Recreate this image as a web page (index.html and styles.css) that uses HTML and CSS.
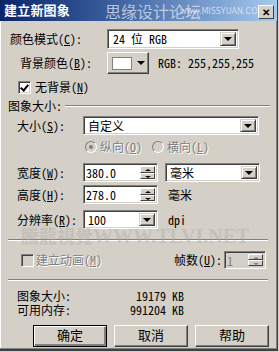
FILE: index.html
```html
<!DOCTYPE html>
<html lang="zh-CN">

<head>
    <meta charset="UTF-8">
    <title>建立新图象</title>
    <link rel="stylesheet" href="styles.css">
</head>

<body>
    <section class="window">
        <header class="titlebar">
            <span class="title">建立新图象</span>
            <span class="mark-cn">思缘设计论坛</span>
            <span class="mark-en">www.MISSYUAN.COM</span>
            <span class="close">✕</span>
        </header>

        <div class="row row-mode">
            <span class="label">颜色模式(<u>C</u>):</span>
            <div class="combo combo-mode">
                <span class="value">24 位 RGB</span>
                <span class="drop"><i class="tri"></i></span>
            </div>
        </div>

        <div class="row row-bg">
            <span class="label">背景颜色(<u>B</u>):</span>
            <div class="color-btn">
                <span class="swatch"></span>
                <i class="tri"></i>
            </div>
            <span class="rgb">RGB: 255,255,255</span>
        </div>

        <div class="row row-check">
            <span class="check checked"></span>
            <span>无背景(<u>N</u>)</span>
        </div>

        <div class="group-head">
            <span>图象大小:</span>
            <span class="etched"></span>
        </div>

        <div class="row row-size">
            <span class="label">大小(<u>S</u>):</span>
            <div class="combo combo-size">
                <span class="value">自定义</span>
                <span class="drop"><i class="tri"></i></span>
            </div>
        </div>

        <div class="row row-radio">
            <span class="radio on"></span>
            <span class="disabled">纵向(<u>O</u>)</span>
            <span class="radio second"></span>
            <span class="disabled">横向(<u>L</u>)</span>
        </div>

        <div class="row row-width">
            <span class="label">宽度(<u>W</u>):</span>
            <div class="spin">
                <span class="value">380.0</span>
                <span class="spin-btns"><i class="up"></i><i class="down"></i></span>
            </div>
            <div class="combo combo-unit">
                <span class="value">毫米</span>
                <span class="drop"><i class="tri"></i></span>
            </div>
        </div>

        <div class="row row-height">
            <span class="label">高度(<u>H</u>):</span>
            <div class="spin">
                <span class="value">278.0</span>
                <span class="spin-btns"><i class="up"></i><i class="down"></i></span>
            </div>
            <span class="unit">毫米</span>
        </div>

        <div class="row row-res">
            <span class="label">分辨率(<u>R</u>):</span>
            <div class="combo combo-res">
                <span class="value">100</span>
                <span class="drop"><i class="tri"></i></span>
            </div>
            <span class="unit">dpi</span>
        </div>

        <div class="sep sep-1"></div>

        <div class="row row-anim">
            <span class="check off"></span>
            <span class="disabled anim-label">建立动画(<u>M</u>)</span>
            <span class="frames">帧数(<u>U</u>):</span>
            <div class="spin spin-off">
                <span class="value">1</span>
                <span class="spin-btns"><i class="up"></i><i class="down"></i></span>
            </div>
        </div>

        <div class="sep sep-2"></div>

        <div class="info">
            <span class="info-label">图象大小:</span>
            <span class="info-value">19179 KB</span>
            <span class="info-label">可用内存:</span>
            <span class="info-value">991204 KB</span>
        </div>

        <div class="buttons">
            <span class="btn default">确定</span>
            <span class="btn">取消</span>
            <span class="btn">帮助</span>
        </div>

        <div class="watermark">騰龍視覺<span class="wm-en">WWW.TLVI.NET</span></div>
    </section>
</body>

</html>
```

FILE: styles.css
```css
body {
    margin: 0;
    background: #d4d0c8;
}

.window {
    position: relative;
    width: 277px;
    height: 349px;
    background: #d4d0c8;
    border-right: 1px solid #404040;
    border-bottom: 2px solid #404040;
    box-shadow: inset -1px -1px 0 #808080, inset 1px 0 0 #ffffff;
    font-family: "Noto Sans Mono CJK SC", "Noto Sans CJK SC", sans-serif;
    font-size: 12px;
    line-height: 14px;
    color: #000;
    overflow: hidden;
}

u {
    text-decoration: underline;
    text-underline-offset: 1px;
}

.titlebar {
    position: relative;
    height: 21px;
    background: linear-gradient(to right, #0a246a 0%, #3a5f9c 40%, #a6caf0 100%);
}

.title {
    position: absolute;
    left: 4px;
    top: 3px;
    font-size: 13px;
    font-weight: bold;
    color: #fff;
    letter-spacing: 0.2px;
}

.mark-cn {
    position: absolute;
    left: 105px;
    top: 1px;
    font-family: "Noto Sans CJK SC", sans-serif;
    font-size: 16px;
    line-height: 20px;
    color: rgba(225, 228, 245, 0.75);
}

.mark-en {
    position: absolute;
    left: 180px;
    top: 7px;
    font-family: "DejaVu Sans", sans-serif;
    font-size: 8px;
    line-height: 10px;
    color: rgba(230, 232, 245, 0.8);
}

.close {
    position: absolute;
    left: 258px;
    top: 5px;
    width: 14px;
    height: 12px;
    background: #d4d0c8;
    border: 1px solid;
    border-color: #fff #404040 #404040 #fff;
    font-size: 10px;
    line-height: 12px;
    font-weight: bold;
    text-align: center;
}

.row {
    display: flex;
    align-items: center;
}

.tri {
    display: block;
    width: 0;
    height: 0;
    border-left: 4px solid transparent;
    border-right: 4px solid transparent;
    border-top: 4px solid #000;
}

.combo,
.spin {
    display: flex;
    box-sizing: border-box;
    background: #fff;
    border: 1px solid;
    border-color: #808080 #fff #fff #808080;
    box-shadow: inset 1px 1px 0 #404040, inset -1px -1px 0 #d4d0c8;
    padding: 2px;
}

.combo .value,
.spin .value {
    flex: 1;
    padding-left: 2px;
    line-height: 13px;
}

.drop {
    display: flex;
    justify-content: center;
    align-items: center;
    width: 16px;
    box-sizing: border-box;
    background: #d4d0c8;
    border: 1px solid;
    border-color: #d4d0c8 #404040 #404040 #d4d0c8;
    box-shadow: inset 1px 1px 0 #fff, inset -1px -1px 0 #808080;
}

.row-mode {
    margin-top: 8px;
    height: 20px;
    padding-left: 10px;
}

.row-mode .label {
    width: 97px;
}

.combo-mode {
    width: 132px;
    height: 20px;
}

.combo-mode .value {
    padding-left: 3px;
}

.row-bg {
    margin-top: 3px;
    height: 22px;
    padding-left: 20px;
}

.row-bg .label {
    width: 87px;
}

.color-btn {
    display: flex;
    align-items: center;
    gap: 5px;
    box-sizing: border-box;
    width: 42px;
    height: 22px;
    padding-left: 4px;
    border: 1px solid;
    border-color: #fff #404040 #404040 #fff;
    box-shadow: inset -1px -1px 0 #808080;
}

.swatch {
    width: 20px;
    height: 13px;
    box-sizing: border-box;
    background: #fff;
    border: 1px solid #808080;
}

.rgb {
    margin-left: 9px;
}

.row-check {
    margin-top: 6px;
    height: 14px;
    padding-left: 18px;
    gap: 4px;
}

.check {
    width: 13px;
    height: 13px;
    box-sizing: border-box;
    border: 1px solid;
    border-color: #808080 #fff #fff #808080;
    box-shadow: inset 1px 1px 0 #404040, inset -1px -1px 0 #d4d0c8;
    background: #fff;
    position: relative;
}

.check.checked::after {
    content: "";
    position: absolute;
    left: 3px;
    top: 1px;
    width: 3px;
    height: 6px;
    border: solid #000;
    border-width: 0 2px 2px 0;
    transform: rotate(40deg);
}

.check.off {
    background: #d4d0c8;
}

.group-head {
    display: flex;
    align-items: center;
    gap: 3px;
    margin-top: 5px;
    height: 14px;
    padding-left: 8px;
    padding-right: 7px;
}

.etched {
    flex: 1;
    height: 0;
    border-top: 1px solid #808080;
    border-bottom: 1px solid #fff;
}

.row-size {
    margin-top: 3px;
    height: 19px;
    padding-left: 17px;
}

.label {
    flex: none;
}

.row-size .label,
.row-width .label,
.row-height .label,
.row-res .label {
    width: 66px;
}

.combo-size {
    width: 176px;
    height: 19px;
}

.row-radio {
    margin-top: 5px;
    height: 14px;
    padding-left: 85px;
}

.radio {
    width: 12px;
    height: 12px;
    box-sizing: border-box;
    border-radius: 50%;
    border: 1px solid;
    border-color: #808080 #fff #fff #808080;
    background: #d4d0c8;
    margin-right: 3px;
    position: relative;
}

.radio.on::after {
    content: "";
    position: absolute;
    left: 3px;
    top: 3px;
    width: 4px;
    height: 4px;
    border-radius: 50%;
    background: #808080;
}

.radio.second {
    margin-left: 10px;
}

.disabled {
    color: #808080;
    text-shadow: 1px 1px 0 #fff;
}

.row-width {
    margin-top: 9px;
    height: 19px;
    padding-left: 17px;
}

.row-height {
    margin-top: 3px;
    height: 19px;
    padding-left: 17px;
}

.spin {
    width: 75px;
    height: 19px;
}

.spin .value {
    padding-left: 0;
}

.spin-btns {
    display: flex;
    flex-direction: column;
    width: 15px;
}

.spin-btns i {
    flex: 1;
    position: relative;
    background: #d4d0c8;
    border: 1px solid;
    border-color: #fff #404040 #404040 #fff;
}

.spin-btns i::after {
    content: "";
    position: absolute;
    left: 4px;
    top: 2px;
    border-left: 3px solid transparent;
    border-right: 3px solid transparent;
}

.spin-btns .up::after {
    border-bottom: 2px solid #000;
}

.spin-btns .down::after {
    border-top: 2px solid #000;
}

.combo-unit {
    margin-left: 7px;
    width: 95px;
    height: 19px;
}

.unit {
    margin-left: 10px;
}

.row-res {
    margin-top: 6px;
    height: 19px;
    padding-left: 17px;
}

.combo-res {
    width: 75px;
    height: 19px;
}

.sep {
    margin-left: 8px;
    margin-right: 9px;
    border-top: 1px solid #808080;
    border-bottom: 1px solid #fff;
}

.sep-1 {
    margin-top: 10px;
}

.row-anim {
    margin-top: 10px;
    height: 18px;
    padding-left: 21px;
}

.anim-label {
    margin-left: 2px;
}

.frames {
    margin-left: 72px;
    width: 50px;
}

.spin-off {
    width: 42px;
    height: 18px;
    background: #d4d0c8;
    color: #808080;
}

.spin-off .spin-btns i::after {
    border-bottom-color: #808080;
    border-top-color: #808080;
}

.sep-2 {
    margin-top: 10px;
}

.info {
    display: grid;
    grid-template-columns: 60px 107px;
    row-gap: 0;
    margin-top: 8px;
    padding-left: 17px;
}

.info-value {
    text-align: right;
}

.buttons {
    display: flex;
    gap: 7px;
    margin-top: 8px;
    padding-left: 33px;
}

.btn {
    box-sizing: border-box;
    width: 74px;
    height: 22px;
    text-align: center;
    line-height: 18px;
    border: 1px solid;
    border-color: #fff #404040 #404040 #fff;
    box-shadow: inset -1px -1px 0 #808080;
    font-family: "Noto Sans CJK SC", sans-serif;
    font-size: 13px;
}

.btn.default {
    border: 1px solid #000;
    box-shadow: inset 1px 1px 0 #fff, inset -2px -2px 0 #808080, inset 2px 2px 0 #d4d0c8;
}

.watermark {
    position: absolute;
    left: 21px;
    top: 223px;
    font-family: "Noto Sans CJK SC", sans-serif;
    font-weight: bold;
    font-size: 18px;
    line-height: 24px;
    color: rgba(170, 166, 158, 0.4);
    white-space: nowrap;
}

.wm-en {
    font-family: "Liberation Serif", serif;
    font-size: 20px;
}
```
